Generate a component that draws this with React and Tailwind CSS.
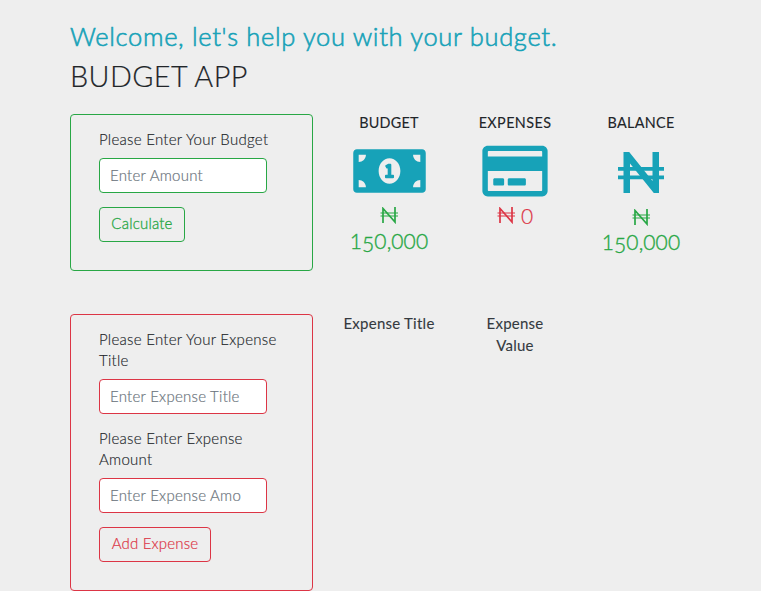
import { FaMoneyBillAlt, FaRegCreditCard } from "react-icons/fa";

function Naira() {
  return (
    <svg className="inline-block h-[17px] w-[18px] shrink-0" viewBox="0 0 18 17" fill="none" stroke="currentColor">
      <path d="M3 16V1.500L15 15V0" strokeWidth="1.700" />
      <path d="M.5 6h17.500M.5 9h17.500" strokeWidth="1.100" />
    </svg>
  );
}

function BigNaira() {
  return (
    <svg className="h-[41px] w-[46px]" viewBox="0 0 46 41" fill="currentColor">
      <path d="M5.500 0h5.700L34.500 29V0H41v41h-5.200L12 11.500V41H5.500Z" />
      <path d="M0 15h46v3.800H0ZM0 23.500h46v3.800H0Z" />
    </svg>
  );
}

function Amount({ gap }) {
  return (
    <div className="flex flex-col items-center text-[#28a745]">
      <Naira />
      <span className={`h-[18px] text-[21px] leading-[18px] tracking-[0.1px] [-webkit-text-stroke:0.35px] ${gap}`}>
        1<span className="inline-block translate-y-[3px]">5</span>0,000
      </span>
    </div>
  );
}

function Field({ label, placeholder, color }) {
  return (
    <label className="block">
      <span className="block text-[15px] leading-[21px] tracking-[0.28px] [-webkit-text-stroke:0.15px]">{label}</span>
      <input
        placeholder={placeholder}
        className={`mt-[8px] block h-[35px] w-[168px] rounded-[4px] border bg-white pr-[24px] pb-[2px] pl-[10px] text-[15px] font-light tracking-[0.26px] [-webkit-text-stroke:0.2px] placeholder:text-[#6c757d] placeholder:opacity-100 ${color}`}
      />
    </label>
  );
}

export default function App() {
  return (
    <div className="h-[591px] overflow-hidden bg-[#eee] pl-[70px] font-['Lato',sans-serif] font-light text-[#212529]">
      <h3 className="pt-[21px] text-[25.500px] leading-[31px] font-light tracking-[0.67px] text-[#17a2b8] [-webkit-text-stroke:0.6px]">
        Welcome, let's help you with your budget.
      </h3>
      <h1 className="mt-[6px] text-[28.800px] leading-[36px] tracking-[0.4px] [-webkit-text-stroke:0.2px]">BUDGET APP</h1>

      <div className="mt-[20px] flex">
        <div className="h-[157px] w-[243px] shrink-0 rounded-[4px] border border-[#28a745] pt-[14px] pl-[28px]">
          <Field label="Please Enter Your Budget" placeholder="Enter Amount" color="border-[#28a745]" />
          <button className="mt-[14px] block h-[35px] w-[86px] rounded-[4px] border border-[#28a745] pb-[2px] text-[15px] tracking-[0.2px] text-[#28a745] [-webkit-text-stroke:0.3px]">
            Calculate
          </button>
        </div>
        <div className="ml-[13px] grid h-[157px] grid-cols-[126px_126px_126px] text-center">
          <div>
            <h6 className="text-[14.400px] leading-[17px] font-normal tracking-[0.2px] [-webkit-text-stroke:0.1px]">BUDGET</h6>
            <FaMoneyBillAlt className="mx-auto mt-[11px] h-[58px] w-[73px] text-[#17a2b8]" />
            <div className="mt-[7px]"><Amount gap="mt-[8px]" /></div>
          </div>
          <div>
            <h6 className="text-[14.400px] leading-[17px] font-normal tracking-[0.4px] [-webkit-text-stroke:0.1px]">EXPENSES</h6>
            <FaRegCreditCard className="mx-auto mt-[11px] h-[58px] w-[66px] text-[#17a2b8]" />
            <div className="mt-[7px] flex items-center justify-center gap-[6px] text-[#dc3545]">
              <Naira />
              <span className="text-[21px] leading-[17px] [-webkit-text-stroke:0.2px]">0</span>
            </div>
          </div>
          <div>
            <h6 className="text-[14.400px] leading-[17px] font-normal tracking-[0.3px] [-webkit-text-stroke:0.1px]">BALANCE</h6>
            <div className="mt-[21px] flex justify-center text-[#17a2b8]"><BigNaira /></div>
            <div className="mt-[16px]"><Amount gap="mt-[7px]" /></div>
          </div>
        </div>
      </div>

      <div className="mt-[43px] flex">
        <div className="h-[277px] w-[243px] shrink-0 rounded-[4px] border border-[#dc3545] pt-[14px] pr-[28px] pl-[28px]">
          <Field label="Please Enter Your Expense Title" placeholder="Enter Expense Title" color="border-[#dc3545]" />
          <div className="mt-[14px]">
            <Field label="Please Enter Expense Amount" placeholder="Enter Expense Amo" color="border-[#dc3545]" />
          </div>
          <button className="mt-[14px] block h-[35px] w-[112px] rounded-[4px] border border-[#dc3545] pb-[2px] text-[15px] tracking-[0.2px] text-[#dc3545] [-webkit-text-stroke:0.2px]">
            Add Expense
          </button>
        </div>
        <div className="-mt-[2px] ml-[13px] grid grid-cols-[126px_126px_126px] text-center text-[15px] leading-[22px] font-normal tracking-[0.25px] text-[#343a40] [-webkit-text-stroke:0.1px]">
          <div>Expense Title</div>
          <div className="px-[24px]">Expense Value</div>
        </div>
      </div>
    </div>
  );
}
